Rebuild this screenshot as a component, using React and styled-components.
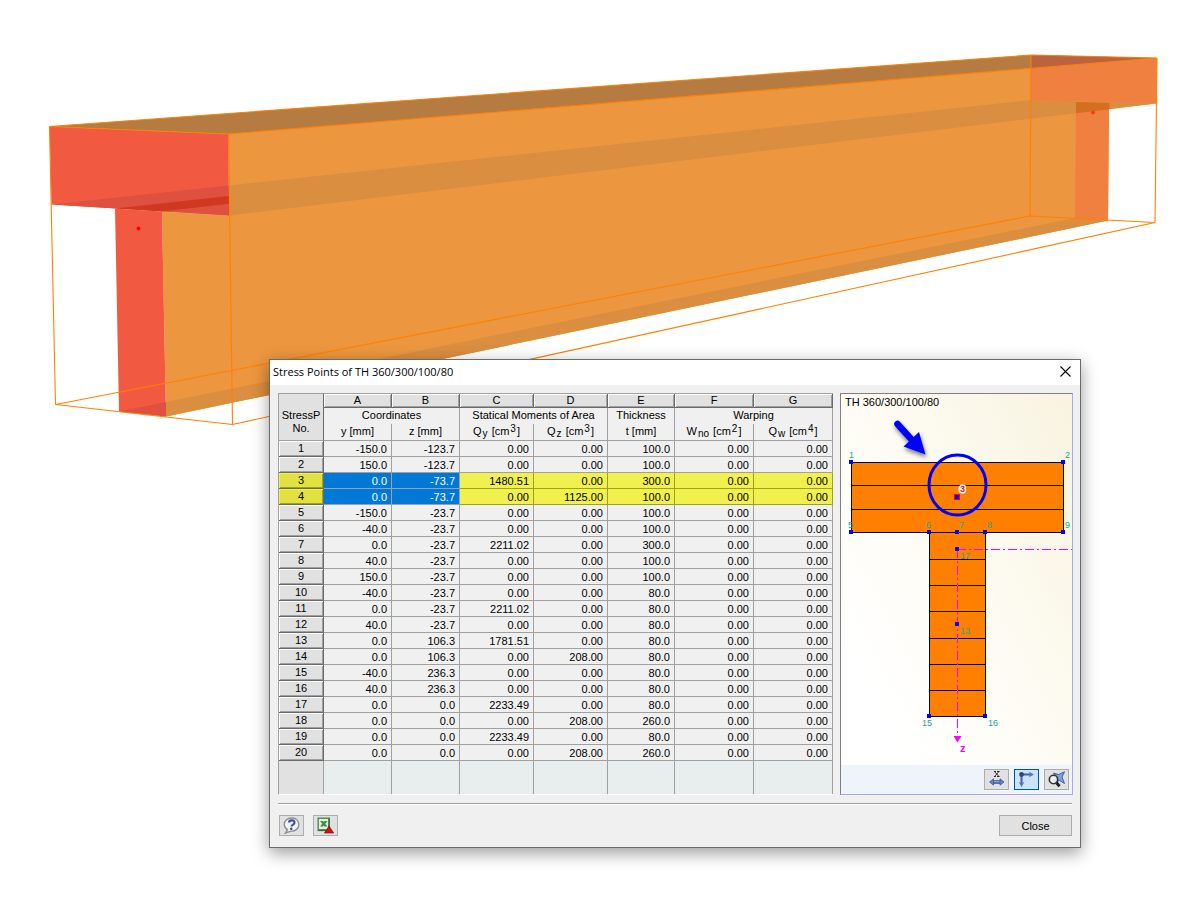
import React from 'react';
import styled, { createGlobalStyle, css } from 'styled-components';

const GlobalStyle = createGlobalStyle`
  * {
    box-sizing: border-box;
  }

  body {
    margin: 0;
    background: #ffffff;
    color: #000000;
    font-family: 'Liberation Sans', Arial, sans-serif;
    font-size: 11px;
  }
`;

const Desktop = styled.main`
  position: relative;
  min-width: 1100px;
  min-height: 100vh;
  overflow: hidden;
`;

const Scene = styled.svg`
  display: block;
  width: 100%;
  height: auto;
`;

const Dialog = styled.section`
  position: absolute;
  top: 359px;
  left: 269px;
  right: 119px;
  min-width: 812px;
  background: #f0f0f0;
  border: 1px solid #6a6b6d;
  box-shadow: 0 5px 16px rgba(0, 0, 0, 0.4);
`;

const TitleBar = styled.header`
  display: flex;
  align-items: center;
  justify-content: space-between;
  height: 25px;
  padding: 0 8px 2px 3px;
  background: #ffffff;
`;

const Title = styled.h1`
  margin: 0;
  font-family: 'Open Sans', sans-serif;
  font-size: 11px;
  font-weight: 400;
`;

const CloseIconButton = styled.button`
  display: flex;
  padding: 0;
  border: none;
  background: none;
`;

const Body = styled.div`
  display: flex;
  align-items: stretch;
  gap: 7px;
  padding: 8px 7px 8px 8px;
`;

const GridArea = styled.div`
  flex: 1;
  min-width: 0;
`;

const Grid = styled.table`
  width: 100%;
  height: 100%;
  table-layout: fixed;
  border-collapse: separate;
  border-spacing: 0;
  border-top: 1px solid #a0a0a0;
  border-left: 1px solid #a0a0a0;
  border-bottom: 1px solid #ffffff;
`;

const raised = css`
  background: #e1e1e1;
  box-shadow: inset 1px 1px 0 #ffffff, inset -1px -1px 0 #a0a0a0;
`;

const HeadCell = styled.th`
  height: ${props => props.$height || 16}px;
  padding: 0 0 2px;
  border-right: 1px solid #a0a0a0;
  font-weight: 400;
  line-height: 13px;
  white-space: nowrap;
`;

const LetterCell = styled(HeadCell)`
  ${raised}
  height: 14px;
  padding: 0;
  border-right: 1px solid #696969;
  border-bottom: 1px solid #696969;
`;

const CornerCell = styled(HeadCell)`
  padding: 9px 0 0;
  background: #e1e1e1;
  border-right-color: #696969;
  border-bottom: 1px solid #a0a0a0;
`;

const UnitCell = styled(HeadCell)`
  border-bottom: 1px solid #a0a0a0;

  sub,
  sup {
    font-size: 10px;
    line-height: 0;
    margin: 0 1px;
  }

  sub {
    vertical-align: -2px;
  }

  sup {
    vertical-align: 3px;
  }
`;

const RowHead = styled.th`
  ${raised}
  height: 16px;
  padding: 0;
  border-right: 1px solid #696969;
  border-bottom: 1px solid #696969;
  font-weight: 400;
  line-height: 15px;

  ${props => props.$marked && css`
    background: #e1e140;
    box-shadow: inset 1px 1px 0 #f0f04e, inset -1px -1px 0 #a0a020;
  `}
`;

const Cell = styled.td`
  height: 16px;
  padding: 1px 4px 0 0;
  border-right: 1px solid #a0a0a0;
  border-bottom: 1px solid #a0a0a0;
  line-height: 14px;
  text-align: right;

  ${props => props.$marked && css`
    background: #f0f04e;
    border-color: #a0a020;
  `}

  ${props => props.$selected && css`
    background: #0078d7;
    border-color: #a0a0a0;
    color: #ffffff;
  `}
`;

const FillerCell = styled.td`
  height: 33px;
  padding: 0;
  background: ${props => (props.$head ? '#e1e1e1' : '#e8eeee')};
  border-right: 1px solid #a0a0a0;
`;

const Preview = styled.aside`
  display: flex;
  flex-direction: column;
  flex: 0 0 233px;
  border: 1px solid #a8a8ee;
  border-top-color: #808080;
  border-left-color: #808080;
`;

const Canvas = styled.div`
  flex: 1;
  background: linear-gradient(62deg, #ffffff 15%, #fdfbf2 55%, #f9f4e2 95%);
`;

const Section = styled.svg`
  display: block;
  width: 100%;
  height: auto;
`;

const PreviewBar = styled.div`
  display: flex;
  align-items: center;
  justify-content: flex-end;
  gap: 5px;
  height: 29px;
  padding: 0 3px;
  background: #eff3fa;
`;

const IconButton = styled.button`
  display: flex;
  align-items: center;
  justify-content: center;
  width: 25px;
  height: 21px;
  padding: 0;
  background: ${props => (props.$active ? '#cce4f7' : '#e1e1e1')};
  border: 1px solid ${props => (props.$active ? '#005499' : '#adadad')};
`;

const Footer = styled.footer`
  display: flex;
  align-items: center;
  gap: 9px;
  margin: 0 8px;
  padding: 11px 0 11px 1px;
  border-top: 1px solid #a0a0a0;
  box-shadow: inset 0 1px 0 #ffffff;
`;

const CloseButton = styled.button`
  width: 73px;
  height: 21px;
  margin-left: auto;
  padding: 0;
  background: #e1e1e1;
  border: 1px solid #adadad;
  color: #000000;
  font-family: inherit;
  font-size: 11px;
`;

const columnWidths = [45, 68, 68, 74, 74, 67, 79, 79];
const letters = ['A', 'B', 'C', 'D', 'E', 'F', 'G'];

const rows = [
  ['-150.0', '-123.7', '0.00', '0.00', '100.0'],
  ['150.0', '-123.7', '0.00', '0.00', '100.0'],
  ['0.0', '-73.7', '1480.51', '0.00', '300.0'],
  ['0.0', '-73.7', '0.00', '1125.00', '100.0'],
  ['-150.0', '-23.7', '0.00', '0.00', '100.0'],
  ['-40.0', '-23.7', '0.00', '0.00', '100.0'],
  ['0.0', '-23.7', '2211.02', '0.00', '300.0'],
  ['40.0', '-23.7', '0.00', '0.00', '100.0'],
  ['150.0', '-23.7', '0.00', '0.00', '100.0'],
  ['-40.0', '-23.7', '0.00', '0.00', '80.0'],
  ['0.0', '-23.7', '2211.02', '0.00', '80.0'],
  ['40.0', '-23.7', '0.00', '0.00', '80.0'],
  ['0.0', '106.3', '1781.51', '0.00', '80.0'],
  ['0.0', '106.3', '0.00', '208.00', '80.0'],
  ['-40.0', '236.3', '0.00', '0.00', '80.0'],
  ['40.0', '236.3', '0.00', '0.00', '80.0'],
  ['0.0', '0.0', '2233.49', '0.00', '80.0'],
  ['0.0', '0.0', '0.00', '208.00', '260.0'],
  ['0.0', '0.0', '2233.49', '0.00', '80.0'],
  ['0.0', '0.0', '0.00', '208.00', '260.0'],
].map(row => [...row, '0.00', '0.00']);

const markedRows = [2, 3];

// label offset is relative to the point itself
const points = [
  { no: '1', x: 10, y: 68, dx: -2, dy: -4 },
  { no: '2', x: 222, y: 68, dx: 2, dy: -4 },
  { no: '5', x: 10, y: 138, dx: -3, dy: -4 },
  { no: '6', x: 88, y: 138, dx: -3, dy: -4 },
  { no: '7', x: 116, y: 138, dx: 2, dy: -4 },
  { no: '8', x: 144, y: 138, dx: 2, dy: -4 },
  { no: '9', x: 222, y: 138, dx: 2, dy: -4 },
  { no: '17', x: 116, y: 155, dx: 3, dy: 10 },
  { no: '13', x: 116, y: 230, dx: 3, dy: 10 },
  { no: '15', x: 88, y: 322, dx: -7, dy: 10 },
  { no: '16', x: 144, y: 322, dx: 3, dy: 10 },
];

function BeamScene() {
  return (
    <Scene viewBox="0 0 1200 900" role="img" aria-label="T-section beam">
      {/* side faces */}
      <polygon fill="#ec963f" points="228.5,134 1157,58 1156,103.5 1109,109 1108,220.5 166,416.5 162,211.5 229,215.5" />
      <polygon fill="#b57b40" points="49.5,126.5 1031,55 1157,58 228.5,134" />
      <polygon fill="#da8e3f" points="229,185.5 1031,100 1156,103.5 229,215.5" />
      <polygon fill="#da8e3f" points="166,402 1075,218 1108,220.5 166,416.5" />

      {/* far end */}
      <polygon fill="#ef8040" points="1031,68.5 1157,58 1156,103.5 1031,100" />
      <polygon fill="#bb6340" points="1031,55 1157,58 1031,68.5" />
      <polygon fill="#ef8040" points="1076,102 1109,103 1108,220.5 1075,218" />
      <polygon fill="#d36f20" points="1076,102 1109.5,103 1109.5,109.2 1076,113.2" />
      <circle cx="1093" cy="112.5" r="2" fill="#f54000" />

      {/* near end */}
      <polygon fill="#f15a40" points="49.5,126.5 228.5,134 229,215.5 51.5,204.5" />
      <polygon fill="#de5040" points="51.5,204.5 229,185.5 229,215.5" />
      <polygon fill="#d13820" points="115,208.5 229,196 229,203.8 162,211.5" />
      <polygon fill="#f15a40" points="115,208.5 162,211.5 166,416.5 119,411.5" />
      <polygon fill="#de5040" points="119,411.5 166,402 166,416.5" />
      <circle cx="138.5" cy="228.5" r="2" fill="#ff0000" />

      <g fill="none" stroke="#ff8000" strokeWidth="1.1">
        <path d="M49.5 126.5 228.5 134 1157 58 1031 55Z" />
        <path d="M55.5 404.5 232.5 424.5 1155 222.5 1030 216Z" />
        <path d="M49.5 126.5 55.5 404.5M228.5 134 232.5 424.5M1157 58 1155 222.5M1031 55 1030 216" />
      </g>
    </Scene>
  );
}

function SectionDrawing() {
  return (
    <Section viewBox="0 0 231 371" role="img" aria-label="Cross-section with stress points">
      <defs>
        <filter id="arrowShadow" x="-30%" y="-30%" width="170%" height="170%">
          <feDropShadow dx="1" dy="3" stdDeviation="2" floodOpacity="0.5" />
        </filter>
      </defs>
      <text x="4" y="12" fontSize="11">TH 360/300/100/80</text>
      <g fill="#ff8000" stroke="#000000" shapeRendering="crispEdges">
        <rect x="10.5" y="68.5" width="212" height="70" />
        <rect x="88.5" y="138.5" width="56" height="184" />
        <path d="M10 91.5H223M10 115.5H223" />
        <path d="M88 165.5H145M88 191.5H145M88 217.5H145M88 244.5H145M88 270.5H145M88 296.5H145" />
      </g>
      <g stroke="#ff00ff" strokeDasharray="9 3 2 3" shapeRendering="crispEdges">
        <path d="M116 155.5H231" />
        <path d="M116.5 155V343" />
      </g>
      <path d="M112.5 342H120.5L116.5 348.5Z" fill="#ff00ff" />
      <text x="119" y="358" fill="#ff00ff" fontSize="11" fontWeight="700">z</text>
      {points.map(point => (
        <g key={point.no}>
          <text x={point.x + point.dx} y={point.y + point.dy} fill="#1fa596" fontSize="9">
            {point.no}
          </text>
          <rect x={point.x - 2} y={point.y - 2} width="4" height="4" fill="#0000ff" />
        </g>
      ))}
      <rect x="113" y="100" width="6" height="6" fill="#ff0000" />
      <rect x="114" y="101" width="4" height="4" fill="#0000ff" />
      <text
        x="119"
        y="98"
        fontSize="9"
        fontWeight="700"
        fill="#d01030"
        stroke="#ffffff"
        strokeWidth="3"
        paintOrder="stroke"
      >
        3
      </text>
      <g filter="url(#arrowShadow)">
        <path d="M56.5 30 71 46" stroke="#0000ff" strokeWidth="6.5" strokeLinecap="round" />
        <path d="M84.5 60.5 62.5 52.5 78 38Z" fill="#0000ff" />
      </g>
      <ellipse cx="116.5" cy="91" rx="28.5" ry="30" fill="none" stroke="#0000ff" strokeWidth="3" />
    </Section>
  );
}

function HelpIcon() {
  return (
    <svg width="18" height="18" viewBox="0 0 18 18" aria-hidden="true">
      <path d="M9 1C4.5 1 1.3 3.700 1.3 7.500C1.3 9.8 2.5 11.5 4.5 12.7L2.5 16L8 14.1C12.5 14.3 15.8 11.5 15.8 7.7C15.8 3.800 13 1 9 1Z" fill="#f1f3f5" stroke="#8b9094" strokeWidth="1.4" />
      <path d="M6 5.500C6.1 2.8 11.7 2.4 11.5 5.7C11.4 7.6 8.7 7.5 8.5 9.5" fill="none" stroke="#3c4f9c" strokeWidth="2.1" />
      <circle cx="8.2" cy="11.8" r="1.3" fill="#3c4f9c" />
    </svg>
  );
}

function ExportIcon() {
  return (
    <svg width="18" height="18" viewBox="0 0 18 18" aria-hidden="true">
      <rect x="1.2" y="1.2" width="11" height="12.3" fill="#e3f0e0" stroke="#4b8a4b" strokeWidth="1.4" />
      <path d="M1.5 13H12V1.500" fill="none" stroke="#2f6a35" strokeWidth="1.4" />
      <path d="M3 4H6L10.5 9.5H7.5ZM7.5 4H10.5L6 9.5H3Z" fill="#3f8c40" />
      <path d="M12 9 16.7 16H7.500Z" fill="#d31111" stroke="#8e0808" strokeWidth="0.7" />
    </svg>
  );
}

function MeasureIcon() {
  return (
    <svg width="18" height="18" viewBox="0 0 18 18" aria-hidden="true">
      <path d="M6 0.500H8M9 0.500H11.5M6.5 0.500 11 5.5M11 0.500 6.5 5.5M6 5.5H8M9 5.5H11.5" stroke="#222222" strokeWidth="0.9" />
      <path d="M4 11H14" stroke="#33508f" strokeWidth="3.6" />
      <path d="M4 10.7H14" stroke="#7c9ae0" strokeWidth="1.8" />
      <path d="M1.5 11 5.5 7.8V14.2ZM16 11 12 7.8V14.2Z" fill="#6384cf" stroke="#33508f" strokeWidth="0.7" />
    </svg>
  );
}

function AxesIcon() {
  return (
    <svg width="18" height="18" viewBox="0 0 18 18" aria-hidden="true">
      <path d="M3.500 3.500H13M3.500 3.500V13" stroke="#45629f" strokeWidth="2" />
      <path d="M11 0.700 16 3.500 11 6.300 12.1 3.500ZM0.700 11 3.500 16 6.300 11 3.500 12.1Z" fill="#5377bd" />
      <circle cx="3.500" cy="3.500" r="2.4" fill="#304779" />
    </svg>
  );
}

function ZoomIcon() {
  return (
    <svg width="18" height="18" viewBox="0 0 18 18" aria-hidden="true">
      <path d="M5.5 2 10.5 3.5 16.5 0.800 14 6 16.5 12.5 11.5 9.5 7 11.500 9 6.5Z" fill="#7da2e5" stroke="#33569f" strokeWidth="0.9" />
      <circle cx="5.500" cy="8.500" r="4.2" fill="#eef2f4" fillOpacity="0.8" stroke="#333333" strokeWidth="1.6" />
      <path d="M8.5 11.8 11.5 15.3" stroke="#222222" strokeWidth="3" />
    </svg>
  );
}

function StressTable() {
  return (
    <Grid>
      <colgroup>
        {columnWidths.map((width, index) => (
          <col key={index} width={width} />
        ))}
      </colgroup>
      <thead>
        <tr>
          <CornerCell rowSpan={3} scope="col">
            StressP
            <br />
            No.
          </CornerCell>
          {letters.map(letter => (
            <LetterCell key={letter} scope="col">{letter}</LetterCell>
          ))}
        </tr>
        <tr>
          <HeadCell colSpan={2}>Coordinates</HeadCell>
          <HeadCell colSpan={2}>Statical Moments of Area</HeadCell>
          <HeadCell>Thickness</HeadCell>
          <HeadCell colSpan={2}>Warping</HeadCell>
        </tr>
        <tr>
          <UnitCell $height={17}>y [mm]</UnitCell>
          <UnitCell>z [mm]</UnitCell>
          <UnitCell>Q<sub>y</sub> [cm<sup>3</sup>]</UnitCell>
          <UnitCell>Q<sub>z</sub> [cm<sup>3</sup>]</UnitCell>
          <UnitCell>t [mm]</UnitCell>
          <UnitCell>W<sub>no</sub> [cm<sup>2</sup>]</UnitCell>
          <UnitCell>Q<sub>w</sub> [cm<sup>4</sup>]</UnitCell>
        </tr>
      </thead>
      <tbody>
        {rows.map((row, rowIndex) => {
          const marked = markedRows.includes(rowIndex);
          return (
            <tr key={rowIndex}>
              <RowHead scope="row" $marked={marked}>{rowIndex + 1}</RowHead>
              {row.map((value, index) => (
                <Cell key={index} $marked={marked} $selected={marked && index < 2}>
                  {value}
                </Cell>
              ))}
            </tr>
          );
        })}
      </tbody>
      <tfoot>
        <tr>
          {columnWidths.map((width, index) => (
            <FillerCell key={index} $head={index === 0} />
          ))}
        </tr>
      </tfoot>
    </Grid>
  );
}

function App() {
  return (
    <Desktop>
      <GlobalStyle />
      <BeamScene />
      <Dialog role="dialog" aria-labelledby="dialog-title">
        <TitleBar>
          <Title id="dialog-title">Stress Points of TH 360/300/100/80</Title>
          <CloseIconButton aria-label="Close dialog">
            <svg width="13" height="13" viewBox="0 0 13 13" aria-hidden="true">
              <path d="M1.5 1.5 11.5 11.5M11.5 1.5 1.5 11.5" stroke="#000000" strokeWidth="1.1" />
            </svg>
          </CloseIconButton>
        </TitleBar>
        <Body>
          <GridArea>
            <StressTable />
          </GridArea>
          <Preview>
            <Canvas>
              <SectionDrawing />
            </Canvas>
            <PreviewBar>
              <IconButton aria-label="Dimensions"><MeasureIcon /></IconButton>
              <IconButton aria-label="Axes" $active><AxesIcon /></IconButton>
              <IconButton aria-label="Zoom all"><ZoomIcon /></IconButton>
            </PreviewBar>
          </Preview>
        </Body>
        <Footer>
          <IconButton aria-label="Help"><HelpIcon /></IconButton>
          <IconButton aria-label="Export to Excel"><ExportIcon /></IconButton>
          <CloseButton>Close</CloseButton>
        </Footer>
      </Dialog>
    </Desktop>
  );
}

export default App;
